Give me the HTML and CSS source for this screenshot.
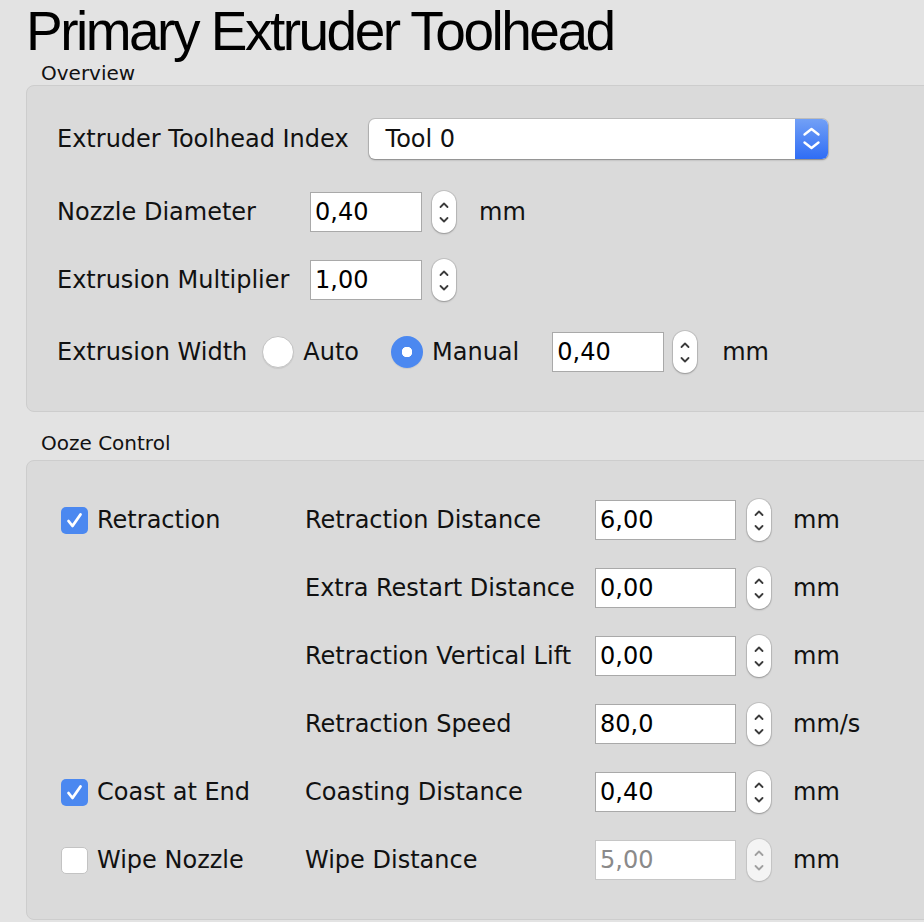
FILE: index.html
```html
<!DOCTYPE html>
<html lang="en">
<head>
    <meta charset="UTF-8">
    <title>Primary Extruder Toolhead</title>
    <link rel="stylesheet" href="styles.css">
</head>
<body>
    <h1 class="title">Primary Extruder Toolhead</h1>

    <div class="group-label">Overview</div>
    <section class="group group-overview">
        <div class="row row-select">
            <span class="label">Extruder Toolhead Index</span>
            <div class="select">
                <span class="select-value">Tool 0</span>
                <span class="select-arrows">
                    <svg width="33" height="40" viewBox="0 0 33 40">
                        <path d="M9.5 15.5 L16.5 10 L23.5 15.5 M9.5 23.5 L16.5 29 L23.5 23.5" fill="none" stroke="#fff" stroke-width="2.4" stroke-linecap="round" stroke-linejoin="round"/>
                    </svg>
                </span>
            </div>
        </div>

        <div class="row">
            <span class="label label-fixed">Nozzle Diameter</span>
            <div class="spin">
                <input class="field" type="text" value="0,40">
                <span class="stepper"><svg width="24" height="42" viewBox="0 0 24 42"><path d="M8.5 16 L12 12.5 L15.5 16 M8.5 27 L12 30.5 L15.5 27" fill="none" stroke="#3c3c3c" stroke-width="1.8" stroke-linecap="round" stroke-linejoin="round"/></svg></span>
                <span class="unit">mm</span>
            </div>
        </div>

        <div class="row">
            <span class="label label-fixed">Extrusion Multiplier</span>
            <div class="spin">
                <input class="field" type="text" value="1,00">
                <span class="stepper"><svg width="24" height="42" viewBox="0 0 24 42"><path d="M8.5 16 L12 12.5 L15.5 16 M8.5 27 L12 30.5 L15.5 27" fill="none" stroke="#3c3c3c" stroke-width="1.8" stroke-linecap="round" stroke-linejoin="round"/></svg></span>
            </div>
        </div>

        <div class="row row-width">
            <span class="label">Extrusion Width</span>
            <label class="radio-item"><span class="radio"></span>Auto</label>
            <label class="radio-item"><span class="radio checked"></span>Manual</label>
            <div class="spin spin-width">
                <input class="field" type="text" value="0,40">
                <span class="stepper"><svg width="24" height="42" viewBox="0 0 24 42"><path d="M8.5 16 L12 12.5 L15.5 16 M8.5 27 L12 30.5 L15.5 27" fill="none" stroke="#3c3c3c" stroke-width="1.8" stroke-linecap="round" stroke-linejoin="round"/></svg></span>
                <span class="unit">mm</span>
            </div>
        </div>
    </section>

    <div class="group-label">Ooze Control</div>
    <section class="group group-ooze">
        <label class="check-item"><span class="check checked"><svg width="27" height="27" viewBox="0 0 27 27"><path d="M7.5 14 L11.5 19 L19.5 7.5" fill="none" stroke="#fff" stroke-width="2.8" stroke-linecap="round" stroke-linejoin="round"/></svg></span>Retraction</label>
        <span class="label">Retraction Distance</span>
        <div class="spin spin-ooze">
            <input class="field field-wide" type="text" value="6,00">
            <span class="stepper"><svg width="24" height="42" viewBox="0 0 24 42"><path d="M8.5 16 L12 12.5 L15.5 16 M8.5 27 L12 30.5 L15.5 27" fill="none" stroke="#3c3c3c" stroke-width="1.8" stroke-linecap="round" stroke-linejoin="round"/></svg></span>
            <span class="unit">mm</span>
        </div>

        <span></span>
        <span class="label">Extra Restart Distance</span>
        <div class="spin spin-ooze">
            <input class="field field-wide" type="text" value="0,00">
            <span class="stepper"><svg width="24" height="42" viewBox="0 0 24 42"><path d="M8.5 16 L12 12.5 L15.5 16 M8.5 27 L12 30.5 L15.5 27" fill="none" stroke="#3c3c3c" stroke-width="1.8" stroke-linecap="round" stroke-linejoin="round"/></svg></span>
            <span class="unit">mm</span>
        </div>

        <span></span>
        <span class="label">Retraction Vertical Lift</span>
        <div class="spin spin-ooze">
            <input class="field field-wide" type="text" value="0,00">
            <span class="stepper"><svg width="24" height="42" viewBox="0 0 24 42"><path d="M8.5 16 L12 12.5 L15.5 16 M8.5 27 L12 30.5 L15.5 27" fill="none" stroke="#3c3c3c" stroke-width="1.8" stroke-linecap="round" stroke-linejoin="round"/></svg></span>
            <span class="unit">mm</span>
        </div>

        <span></span>
        <span class="label">Retraction Speed</span>
        <div class="spin spin-ooze">
            <input class="field field-wide" type="text" value="80,0">
            <span class="stepper"><svg width="24" height="42" viewBox="0 0 24 42"><path d="M8.5 16 L12 12.5 L15.5 16 M8.5 27 L12 30.5 L15.5 27" fill="none" stroke="#3c3c3c" stroke-width="1.8" stroke-linecap="round" stroke-linejoin="round"/></svg></span>
            <span class="unit">mm/s</span>
        </div>

        <label class="check-item"><span class="check checked"><svg width="27" height="27" viewBox="0 0 27 27"><path d="M7.5 14 L11.5 19 L19.5 7.5" fill="none" stroke="#fff" stroke-width="2.8" stroke-linecap="round" stroke-linejoin="round"/></svg></span>Coast at End</label>
        <span class="label">Coasting Distance</span>
        <div class="spin spin-ooze">
            <input class="field field-wide" type="text" value="0,40">
            <span class="stepper"><svg width="24" height="42" viewBox="0 0 24 42"><path d="M8.5 16 L12 12.5 L15.5 16 M8.5 27 L12 30.5 L15.5 27" fill="none" stroke="#3c3c3c" stroke-width="1.8" stroke-linecap="round" stroke-linejoin="round"/></svg></span>
            <span class="unit">mm</span>
        </div>

        <label class="check-item"><span class="check"></span>Wipe Nozzle</label>
        <span class="label">Wipe Distance</span>
        <div class="spin spin-ooze">
            <input class="field field-wide" type="text" value="5,00" disabled>
            <span class="stepper disabled"><svg width="24" height="42" viewBox="0 0 24 42"><path d="M8.5 16 L12 12.5 L15.5 16 M8.5 27 L12 30.5 L15.5 27" fill="none" stroke="#a0a0a0" stroke-width="1.8" stroke-linecap="round" stroke-linejoin="round"/></svg></span>
            <span class="unit">mm</span>
        </div>
    </section>
</body>
</html>
```

FILE: styles.css
```css
html, body {
    overflow: hidden;
}
body {
    margin: 0;
    background-color: #e3e3e3;
    font-family: "DejaVu Sans", sans-serif;
    font-size: 24px;
    color: #111;
}
.title {
    margin: 0 0 0 26px;
    font-family: "Liberation Sans", Arial, sans-serif;
    font-size: 55px;
    font-weight: normal;
    letter-spacing: -2.5px;
    line-height: 62px;
    color: #000;
}
.group-label {
    margin-left: 41px;
    font-size: 20px;
    line-height: 23px;
}
.group {
    margin: 0 -20px 0 26px;
    background-color: #dadada;
    border: 1px solid #cdcdcd;
    border-radius: 8px;
}
.group-overview {
    display: flex;
    flex-direction: column;
    gap: 26px;
    padding: 33px 0 38px 30px;
}
.row {
    display: flex;
    align-items: center;
    height: 42px;
}
.row-select {
    height: 40px;
    margin-bottom: 6px;
}
.row-width {
    margin-top: 4px;
}
.label {
    white-space: nowrap;
}
.row-select .label {
    margin-right: 20px;
}
.label-fixed {
    width: 253px;
}
.select {
    display: flex;
    width: 459px;
    height: 40px;
    background: white;
    border-radius: 6px;
    box-shadow: 0 0 0 1px rgba(0,0,0,0.12), 0 1px 2px rgba(0,0,0,0.3);
}
.select-value {
    flex: 1;
    padding-left: 17px;
    line-height: 40px;
}
.select-arrows {
    width: 33px;
    height: 40px;
    background: linear-gradient(#72a0f6, #2f6df5);
    border-radius: 0 6px 6px 0;
}
.select-arrows svg,
.stepper svg,
.check svg {
    display: block;
}
.spin {
    display: flex;
    align-items: center;
}
.field {
    width: 112px;
    height: 40px;
    box-sizing: border-box;
    margin: 0;
    padding: 0 0 0 4px;
    border: 1px solid #a9a9a9;
    background: white;
    font-family: "DejaVu Sans", sans-serif;
    font-size: 24px;
    color: #000;
    outline: none;
}
.field-wide {
    width: 141px;
}
.field:disabled {
    border-color: #c6c6c6;
    color: #8a8a8a;
    background: white;
}
.stepper {
    width: 24px;
    height: 42px;
    margin-left: 10px;
    background: white;
    border-radius: 12px;
    box-shadow: 0 0 0 1px rgba(0,0,0,0.1), 0 1px 2px rgba(0,0,0,0.25);
}
.stepper.disabled {
    background: #f4f4f4;
    box-shadow: 0 0 0 1px rgba(0,0,0,0.07), 0 1px 2px rgba(0,0,0,0.12);
}
.unit {
    margin-left: 23px;
}
.radio-item {
    display: flex;
    align-items: center;
    gap: 9px;
}
.row-width .label {
    margin-right: 15px;
}
.radio-item + .radio-item {
    margin-left: 32px;
}
.radio {
    box-sizing: border-box;
    width: 32px;
    height: 32px;
    border-radius: 50%;
    background: white;
    border: 1px solid #c3c3c3;
    box-shadow: 0 1px 1px rgba(0,0,0,0.08);
}
.radio.checked {
    border: none;
    background: radial-gradient(circle, white 0 5px, #4b88f0 5.5px);
}
.spin-width {
    margin-left: 33px;
}
.spin-width .stepper {
    margin-left: 9px;
}
.spin-width .unit {
    margin-left: 25px;
}
.group-overview + .group-label {
    margin-top: 20px;
}
.group-ooze {
    margin-top: 5px;
    display: grid;
    grid-template-columns: 244px 290px auto;
    grid-auto-rows: 42px;
    row-gap: 26px;
    align-items: center;
    padding: 38px 0 38px 34px;
}
.spin-ooze .stepper {
    margin-left: 11px;
}
.spin-ooze .unit {
    margin-left: 22px;
}
.check-item {
    display: flex;
    align-items: center;
    gap: 9px;
    white-space: nowrap;
}
.check {
    box-sizing: border-box;
    width: 27px;
    height: 27px;
    border-radius: 5px;
    background: white;
    border: 1px solid #c3c3c3;
}
.check.checked {
    border: none;
    background: #4b88f0;
}
```
